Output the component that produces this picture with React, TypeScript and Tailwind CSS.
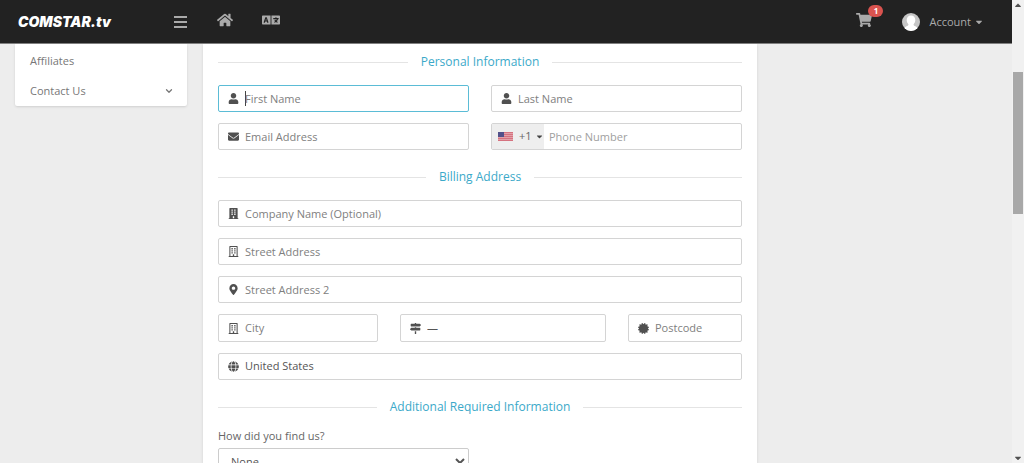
import type { InputHTMLAttributes, ReactNode } from "react";
import type { IconType } from "react-icons";
import {
  FaBuilding,
  FaCaretDown,
  FaCaretUp,
  FaCertificate,
  FaEnvelope,
  FaGlobe,
  FaHome,
  FaLanguage,
  FaMapMarkerAlt,
  FaMapSigns,
  FaRegBuilding,
  FaShoppingCart,
  FaUser,
} from "react-icons/fa";
import { ChevronDown } from "lucide-react";

const boxClass = "relative flex items-center rounded-xs border bg-white";

interface FieldProps extends InputHTMLAttributes<HTMLInputElement> {
  id: string;
  label: string;
  icon: IconType;
  active?: boolean;
}

// The label lies over the empty input and goes away once something is typed
const Field = ({ id, label, icon: Icon, active, ...rest }: FieldProps) => (
  <div className={`${boxClass} h-full min-h-[27px] ${active ? "border-[#5bbcd6]" : "border-[#d4d4d4]"}`}>
    <span className="flex w-[26px] shrink-0 justify-end pr-1.5 text-[#505050]">
      <Icon size={11} aria-hidden="true" />
    </span>
    {active && <span className="absolute left-[26px] h-[15px] w-px bg-[#444]" />}
    <input
      id={id}
      placeholder=" "
      className="peer h-[25px] w-full min-w-0 bg-transparent text-[11px] text-[#555] caret-transparent outline-none"
      {...rest}
    />
    <label
      htmlFor={id}
      className="pointer-events-none invisible absolute left-[26px] text-[11px] leading-4 whitespace-nowrap text-[#808080] peer-placeholder-shown:visible"
    >
      {label}
    </label>
  </div>
);

interface IconSelectProps {
  id: string;
  label: string;
  icon: IconType;
  options: string[];
}

const IconSelect = ({ id, label, icon: Icon, options }: IconSelectProps) => (
  <div className={`${boxClass} h-full min-h-[27px] border-[#d4d4d4]`}>
    <label htmlFor={id} aria-label={label} className="flex w-[26px] shrink-0 justify-end pr-1.5 text-[#505050]">
      <Icon size={11} aria-hidden="true" />
    </label>
    <select id={id} className="h-[25px] w-full min-w-0 appearance-none bg-transparent text-[11px] text-[#555] outline-none">
      {options.map((option) => (
        <option key={option}>{option}</option>
      ))}
    </select>
  </div>
);

const SectionTitle = ({ children }: { children: ReactNode }) => (
  <div className="mt-[18px] mb-3.5 flex h-[18px] items-center gap-[13px]">
    <span className="h-px flex-1 bg-[#e4e4e4]" />
    <h2 className="text-[12px] leading-[18px] text-[#3ba9c9]">{children}</h2>
    <span className="h-px flex-1 bg-[#e4e4e4]" />
  </div>
);

const MenuIcon = () => (
  <svg width="13" height="12" viewBox="0 0 13 12" fill="currentColor" aria-hidden="true">
    <rect width="13" height="2" />
    <rect y="5" width="13" height="2" />
    <rect y="10" width="13" height="2" />
  </svg>
);

const UsFlag = () => (
  <svg width="15" height="9" viewBox="0 0 15 9" aria-hidden="true">
    <rect width="15" height="9" fill="#e3a0a8" />
    {[0, 2, 4, 6, 8].map((y) => (
      <rect key={y} y={y} width="15" height="1" fill="#d5727f" />
    ))}
    <rect width="6" height="5" fill="#52518a" />
  </svg>
);

const Avatar = () => (
  <svg width="18" height="18" viewBox="0 0 18 18" aria-hidden="true">
    <defs>
      <clipPath id="avatar-clip">
        <circle cx="9" cy="9" r="9" />
      </clipPath>
    </defs>
    <g clipPath="url(#avatar-clip)">
      <rect width="18" height="18" fill="#c6c6c6" />
      <path
        d="M9 2.6c2.7 0 4.3 1.9 4.3 4.5 0 1.8-.7 3.2-1.7 4.1v.9c.3 1 3.2 1.3 3.9 3.2L15 18H3l-.5-2.7c.7-1.9 3.6-2.2 3.9-3.2v-.9C5.4 10.3 4.7 8.9 4.7 7.1 4.7 4.5 6.3 2.6 9 2.6z"
        fill="#fff"
      />
    </g>
  </svg>
);

const Header = () => (
  <header className="flex h-11 shrink-0 items-center border-b border-[#808080] bg-[#222] pr-7 pl-[18px] text-[#aaa]">
    <a href="#" className="w-[156px] font-['Inter'] text-[14px] leading-5 font-black text-white italic">
      COMSTAR.tv
    </a>
    <button type="button" aria-label="Toggle menu" className="w-[43px]">
      <MenuIcon />
    </button>
    <div className="flex h-10 items-center self-start">
      <a href="#" aria-label="Home" className="w-[45px]">
        <FaHome size={16} />
      </a>
      <button type="button" aria-label="Language">
        <FaLanguage size={18} />
      </button>
    </div>
    <div className="ml-auto flex h-10 items-center self-start">
      <a href="#" aria-label="Cart" className="relative">
        <FaShoppingCart size={16} />
        <span className="absolute -top-[7px] left-3 flex h-3 w-[15px] items-center justify-center rounded-full bg-[#d9534f] text-[8px] font-bold text-white">
          1
        </span>
      </a>
    </div>
    <button type="button" className="ml-[30px] flex items-center text-[11px] leading-4">
      <Avatar />
      <span className="ml-[9px]">Account</span>
      <FaCaretDown size={10} className="ml-[3px]" />
    </button>
  </header>
);

const Sidebar = () => (
  <nav className="w-[172px] shrink-0 self-start rounded-b-xs bg-white px-[15px] pt-0.5 text-[11px] text-[#777] shadow-sm">
    <a href="#" className="flex h-[30px] items-center">
      Affiliates
    </a>
    <a href="#" className="flex h-[30px] items-center justify-between">
      Contact Us
      <ChevronDown size={10} strokeWidth={3} className="-mr-0.5" />
    </a>
  </nav>
);

const SignupForm = () => (
  <form className="min-h-full w-[554px] bg-white px-[15px] shadow-sm">
    <div className="-mt-[9px]">
      <SectionTitle>Personal Information</SectionTitle>
    </div>
    <div className="grid auto-rows-[27px] grid-cols-2 gap-x-[22px] gap-y-[11px]">
      <Field id="first-name" label="First Name" icon={FaUser} active />
      <Field id="last-name" label="Last Name" icon={FaUser} />
      <Field id="email" label="Email Address" icon={FaEnvelope} type="email" />
      <div className={`${boxClass} border-[#d4d4d4]`}>
        <button
          type="button"
          aria-label="Country code"
          className="flex h-full w-[52px] shrink-0 items-center bg-[#eee] pl-1.5 text-[11px] text-[#666]"
        >
          <UsFlag />
          <span className="ml-1.5">+1</span>
          <FaCaretDown size={9} className="ml-[3px] text-[#444]" />
        </button>
        <input
          id="phone"
          type="tel"
          placeholder=" "
          className="peer h-[25px] w-full min-w-0 bg-transparent pl-[5px] text-[11px] text-[#555] outline-none"
        />
        <label
          htmlFor="phone"
          className="pointer-events-none invisible absolute left-[57px] text-[11px] leading-4 whitespace-nowrap text-[#a0a0a0] peer-placeholder-shown:visible"
        >
          Phone Number
        </label>
      </div>
    </div>

    <SectionTitle>Billing Address</SectionTitle>
    <div className="flex flex-col gap-[11px]">
      <Field id="company" label="Company Name (Optional)" icon={FaBuilding} />
      <Field id="street" label="Street Address" icon={FaRegBuilding} />
      <Field id="street-2" label="Street Address 2" icon={FaMapMarkerAlt} />
      <div className="grid h-7 grid-cols-[160fr_206fr_114fr] gap-[22px]">
        <Field id="city" label="City" icon={FaRegBuilding} />
        <IconSelect id="state" label="State" icon={FaMapSigns} options={["—"]} />
        <Field id="postcode" label="Postcode" icon={FaCertificate} />
      </div>
      <IconSelect id="country" label="Country" icon={FaGlobe} options={["United States"]} />
    </div>

    <SectionTitle>Additional Required Information</SectionTitle>
    <label htmlFor="referral" className="-mt-0.5 block pb-1 text-[11px] leading-4 text-[#666]">
      How did you find us?
    </label>
    <select
      id="referral"
      className="h-[27px] w-[251px] rounded-xs border border-[#ccc] bg-white pl-2 text-[11px] text-[#555]"
    >
      <option>None</option>
    </select>
  </form>
);

const ScrollTrack = () => (
  <div className="flex w-3 shrink-0 flex-col items-center bg-[#f1f1f1] text-[#505050]" aria-hidden="true">
    <FaCaretUp size={10} />
    <div className="mt-[62px] h-[142px] w-2.5 bg-[#a8a8a8]" />
    <FaCaretDown size={10} className="mt-auto" />
  </div>
);

export default function App() {
  return (
    <div className="flex h-screen overflow-hidden bg-[#ededed] font-['Open_Sans',sans-serif]">
      <div className="flex min-w-0 flex-1 flex-col">
        <Header />
        <main className="flex min-h-0 flex-1 gap-4 overflow-hidden pl-[15px]">
          <Sidebar />
          <SignupForm />
        </main>
      </div>
      <ScrollTrack />
    </div>
  );
}
